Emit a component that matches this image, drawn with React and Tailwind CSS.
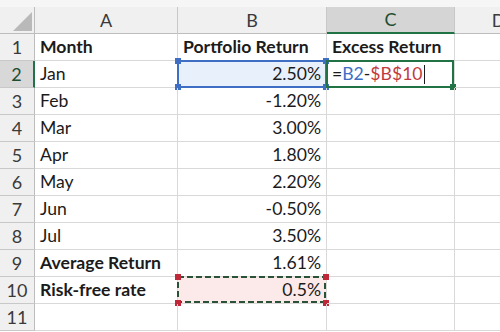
import React from 'react';

const font = { fontFamily: 'Lato, "Open Sans", sans-serif' };

const rows = [
  { a: 'Month', b: 'Portfolio Return', c: 'Excess Return', bold: true, head: true },
  { a: 'Jan', b: '2.50%' },
  { a: 'Feb', b: '-1.20%' },
  { a: 'Mar', b: '3.00%' },
  { a: 'Apr', b: '1.80%' },
  { a: 'May', b: '2.20%' },
  { a: 'Jun', b: '-0.50%' },
  { a: 'Jul', b: '3.50%' },
  { a: 'Average Return', b: '1.61%', aBold: true },
  { a: 'Risk-free rate', b: '0.5%', aBold: true },
  { a: '', b: '' },
];

const Handle = ({ className }) => (
  <span className={`absolute w-[6px] h-[6px] ${className}`} />
);

const ColHeader = ({ label, active }) => (
  <div
    className={`flex items-center justify-center border-r border-[#c8c8c8] text-[18px] ${
      active
        ? 'bg-[#d5d5d5] text-[#1f4d30] border-b-2 border-b-[#217346]'
        : 'bg-[#f0f0f0] text-[#3a3a3a] border-b border-b-[#bdbdbd]'
    }`}
  >
    {label}
  </div>
);

const Cell = ({ children, className = '' }) => (
  <div className={`relative flex items-center border-r border-b border-[#d9d9d9] text-[17.6px] text-[#1b1b1b] ${className}`}>
    {children}
  </div>
);

export default function App() {
  return (
    <div className="w-[500px] h-[332px] overflow-hidden bg-white" style={font}>
      <div className="grid grid-cols-[35px_143px_149px_128px_88px] grid-rows-[7px_27px_repeat(11,27px)] w-[543px]">
        {/* top strip */}
        <div className="col-span-5 bg-[#f6f6f6]" />

        {/* column headers */}
        <div className="relative bg-[#f0f0f0] border-r border-b border-[#bdbdbd]">
          <svg className="absolute left-[13px] top-[5px]" width="19" height="19" viewBox="0 0 19 19">
            <polygon points="19,0 19,19 0,19" fill="#b9b9b9" />
          </svg>
        </div>
        <ColHeader label="A" />
        <ColHeader label="B" />
        <ColHeader label="C" active />
        <ColHeader label="D" />

        {rows.map((r, i) => {
          const n = i + 1;
          const selRow = n === 2;
          return (
            <React.Fragment key={n}>
              <div
                className={`flex items-center justify-center text-[18px] border-b border-[#c8c8c8] ${
                  selRow
                    ? 'bg-[#d8d8d8] text-[#1f4d30] border-r-2 border-r-[#217346]'
                    : 'bg-[#f0f0f0] text-[#3a3a3a] border-r border-r-[#bdbdbd]'
                }`}
              >
                {n}
              </div>

              <Cell className={`pl-[5px] ${r.bold || r.aBold ? 'font-bold' : ''}`}>{r.a}</Cell>

              <Cell
                className={`pr-[5px] ${r.head ? 'pl-[5px] font-bold' : 'justify-end'} ${
                  n === 2 ? 'bg-[#e8f0fb]' : ''
                } ${n === 10 ? 'bg-[#fceaea]' : ''}`}
              >
                {r.b}
                {n === 2 && (
                  <div className="absolute -left-[1px] -top-[1px] -right-[1px] -bottom-[1px] border-2 border-[#3f6fc4]">
                    <Handle className="-left-[4px] -top-[4px] bg-[#3f6fc4]" />
                    <Handle className="-right-[4px] -top-[4px] bg-[#3f6fc4]" />
                    <Handle className="-left-[4px] -bottom-[4px] bg-[#3f6fc4]" />
                    <Handle className="-right-[4px] -bottom-[4px] bg-[#3f6fc4]" />
                  </div>
                )}
                {n === 10 && (
                  <div className="absolute -left-[1px] -top-[1px] -right-[1px] -bottom-[1px]">
                    <svg className="absolute inset-0" width="100%" height="100%">
                      <rect x="1" y="1" width="147" height="25" fill="none" stroke="#2a5236" strokeWidth="2" strokeDasharray="6 3" />
                    </svg>
                    <Handle className="-left-[2px] -top-[2px] bg-[#c0283a]" />
                    <Handle className="-right-[2px] -top-[2px] bg-[#c0283a]" />
                    <Handle className="-left-[2px] -bottom-[2px] bg-[#c0283a]" />
                    <Handle className="-right-[2px] -bottom-[2px] bg-[#c0283a]" />
                  </div>
                )}
              </Cell>

              <Cell className={`pl-[5px] ${r.head ? 'font-bold' : ''}`}>
                {r.c}
                {n === 2 && (
                  <>
                    <span className="text-[#1b1b1b]">=</span>
                    <span className="text-[#3d6fc5]">B2</span>
                    <span className="text-[#1b1b1b]">-</span>
                    <span className="text-[#c2393d]">$B$10</span>
                    <span className="ml-[1px] w-px h-[19px] bg-[#1b1b1b]" />
                    <div className="absolute -left-[1px] -top-[1px] right-0 -bottom-[1px] border-2 border-[#217346]">
                      <Handle className="-right-[4px] -bottom-[4px] bg-[#217346]" />
                    </div>
                  </>
                )}
              </Cell>

              <Cell />
            </React.Fragment>
          );
        })}
      </div>
    </div>
  );
}
